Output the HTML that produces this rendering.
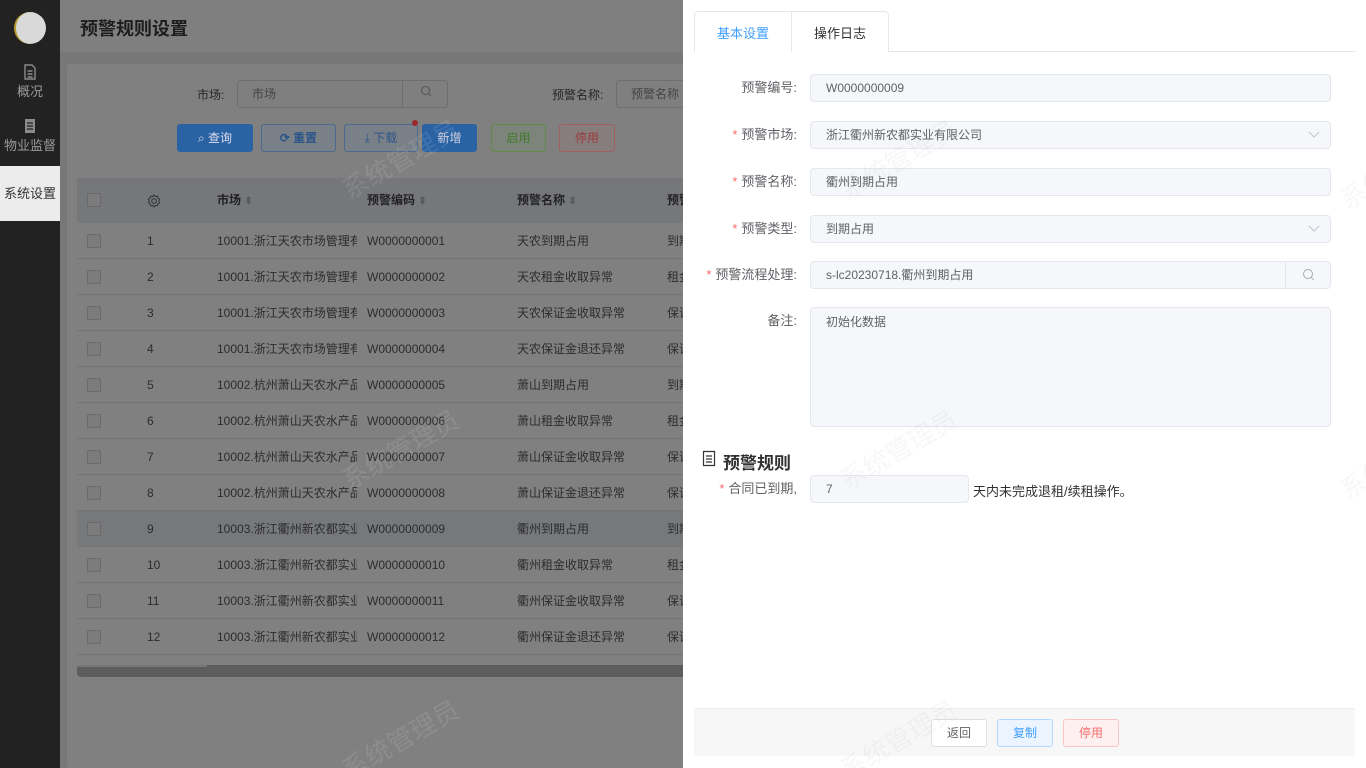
<!DOCTYPE html>
<html style="width:1366px;height:768px;overflow:hidden"><head><meta charset="utf-8">
<style>
*{margin:0;padding:0;box-sizing:border-box}
body{width:1366px;height:768px;overflow:hidden;position:relative;font-family:"Liberation Sans","Noto Sans CJK SC",sans-serif;font-size:12px;color:#333;background:#777}
.a{position:absolute}
.side{left:0;top:0;width:60px;height:768px;background:#222}
.logo{left:14px;top:12px;width:32px;height:32px;border-radius:50%;background:#d9d9d9;border-left:2px solid #b89a30}
.nav{left:0;width:60px;text-align:center;color:#9a9a9a;font-size:13px}
.hdr{left:60px;top:0;width:623px;height:52px;background:#7f7f7f}
.hdr h1{position:absolute;left:20px;top:15px;font-size:18px;color:#1d1d1d;font-weight:bold}
.card{left:67px;top:64px;width:616px;height:704px;background:#808080;border-radius:3px}
.inp{border:1px solid #6e6e6e;border-radius:3px;background:#7f7f7f;color:#444;padding-left:14px;line-height:26px;height:28px}
.btn{height:28px;line-height:26px;border-radius:3px;text-align:center;font-size:12px;border:1px solid}
.th{left:77px;top:178px;width:606px;height:45px;background:#75777b}
.row{left:77px;width:606px;height:36px;border-bottom:1px solid #747474}
.row span,.th span{position:absolute;top:0;line-height:36px;white-space:nowrap;overflow:hidden;color:#2c2c2c}
.th span{line-height:45px;font-weight:bold;color:#222}
.cb{position:absolute;left:10px;top:11px;width:14px;height:14px;border:1px solid #6a6a6a;border-radius:2px;background:#7c7c7c}
.c1{left:70px}.c2{left:140px;width:140px}.c3{left:290px}.c4{left:440px}.c5{left:590px;width:16px}
.wm{position:absolute;font-size:26px;transform:rotate(-30deg);white-space:nowrap}
.drawer{left:683px;top:0;width:683px;height:768px;background:#fff;overflow:hidden}
.lbl{position:absolute;width:114px;left:0;text-align:right;font-size:13px;color:#606266;line-height:28px}
.lbl i{color:#f56c6c;font-style:normal;margin-right:4px}
.fi{position:absolute;left:127px;width:521px;height:28px;background:#f5f7fa;border:1px solid #e4e7ed;border-radius:4px;color:#606266;font-size:12px;line-height:26px;padding-left:15px}
</style></head><body>
<div class="a side"></div>
<div class="a logo"></div>
<div class="a nav" style="top:64px">
<svg width="14" height="16" viewBox="0 0 14 16"><path d="M2 1h7l3 3v11H2z M4.5 7h5M4.5 10h5M4.5 13h5" fill="none" stroke="#8a8a8a" stroke-width="1.4"/></svg><div style="margin-top:-2px">概况</div></div>
<div class="a nav" style="top:118px">
<svg width="14" height="16" viewBox="0 0 14 16"><rect x="2" y="1" width="10" height="14" fill="#8a8a8a"/><path d="M4 5h6M4 8h6M4 11h6" stroke="#222" stroke-width="1.2"/></svg><div style="margin-top:-2px">物业监督</div></div>
<div class="a" style="left:0;top:166px;width:60px;height:55px;background:#ececec;color:#333;font-size:13px;line-height:55px;text-align:center">系统设置</div>

<div class="a hdr"><h1>预警规则设置</h1></div>
<div class="a card"></div>
<div class="a" style="left:197px;top:86px;color:#262626;font-size:12px">市场:</div>
<div class="a inp" style="left:237px;top:80px;width:211px">市场</div>
<div class="a" style="left:402px;top:80px;width:46px;height:28px;border-left:1px solid #6e6e6e;text-align:center;line-height:26px;color:#555"><svg width="12" height="12" viewBox="0 0 12 12"><circle cx="5.5" cy="5.5" r="4" fill="none" stroke="#555" stroke-width="1.1"/><path d="M8.5 8.5l2.5 2.5" stroke="#555"/></svg></div>
<div class="a" style="left:552px;top:86px;color:#262626">预警名称:</div>
<div class="a inp" style="left:616px;top:80px;width:80px">预警名称</div>

<div class="a btn" style="left:177px;top:124px;width:76px;background:#2a63a4;border-color:#2a63a4;color:#dde">&#x2315; 查询</div>
<div class="a btn" style="left:261px;top:124px;width:75px;background:#7a8088;border-color:#4a6a90;color:#2a5588;font-weight:bold">⟳ 重置</div>
<div class="a btn" style="left:344px;top:124px;width:74px;background:#7a8088;border-color:#4a6a90;color:#2a5588">⤓ 下载</div>
<div class="a" style="left:412px;top:120px;width:6px;height:6px;border-radius:50%;background:#9a2a2a"></div>
<div class="a btn" style="left:422px;top:124px;width:55px;background:#2a63a4;border-color:#2a63a4;color:#ccd">新增</div>
<div class="a btn" style="left:491px;top:124px;width:55px;background:#7d857b;border-color:#5f8a4a;color:#3e7a2a">启用</div>
<div class="a btn" style="left:559px;top:124px;width:56px;background:#877d7d;border-color:#a06060;color:#9a3a3a">停用</div>

<div class="a th"><div class="cb" style="top:15px"></div>
<span style="left:70px"><svg width="14" height="14" viewBox="0 0 14 14" style="vertical-align:middle"><circle cx="7" cy="7" r="2.3" fill="none" stroke="#333"/><path d="M7 1l1.4 1.6 2-.4.5 2 1.8 1-1 1.8 1 1.8-1.8 1-.5 2-2-.4L7 13l-1.4-1.6-2 .4-.5-2-1.8-1 1-1.8-1-1.8 1.8-1 .5-2 2 .4z" fill="none" stroke="#333" stroke-width="1"/></svg></span>
<span class="c2">市场 <b style="color:#5a5a5a;font-size:10px">⬍</b></span><span class="c3">预警编码 <b style="color:#5a5a5a;font-size:10px">⬍</b></span><span class="c4">预警名称 <b style="color:#5a5a5a;font-size:10px">⬍</b></span><span class="c5">预警</span></div>

<div class="a row" style="top:223px"><div class="cb"></div><span class="c1">1</span><span class="c2">10001.浙江天农市场管理有限公司</span><span class="c3">W0000000001</span><span class="c4">天农到期占用</span><span class="c5">到期</span></div>
<div class="a row" style="top:259px"><div class="cb"></div><span class="c1">2</span><span class="c2">10001.浙江天农市场管理有限公司</span><span class="c3">W0000000002</span><span class="c4">天农租金收取异常</span><span class="c5">租金</span></div>
<div class="a row" style="top:295px"><div class="cb"></div><span class="c1">3</span><span class="c2">10001.浙江天农市场管理有限公司</span><span class="c3">W0000000003</span><span class="c4">天农保证金收取异常</span><span class="c5">保证</span></div>
<div class="a row" style="top:331px"><div class="cb"></div><span class="c1">4</span><span class="c2">10001.浙江天农市场管理有限公司</span><span class="c3">W0000000004</span><span class="c4">天农保证金退还异常</span><span class="c5">保证</span></div>
<div class="a row" style="top:367px"><div class="cb"></div><span class="c1">5</span><span class="c2">10002.杭州萧山天农水产品市场</span><span class="c3">W0000000005</span><span class="c4">萧山到期占用</span><span class="c5">到期</span></div>
<div class="a row" style="top:403px"><div class="cb"></div><span class="c1">6</span><span class="c2">10002.杭州萧山天农水产品市场</span><span class="c3">W0000000006</span><span class="c4">萧山租金收取异常</span><span class="c5">租金</span></div>
<div class="a row" style="top:439px"><div class="cb"></div><span class="c1">7</span><span class="c2">10002.杭州萧山天农水产品市场</span><span class="c3">W0000000007</span><span class="c4">萧山保证金收取异常</span><span class="c5">保证</span></div>
<div class="a row" style="top:475px"><div class="cb"></div><span class="c1">8</span><span class="c2">10002.杭州萧山天农水产品市场</span><span class="c3">W0000000008</span><span class="c4">萧山保证金退还异常</span><span class="c5">保证</span></div>
<div class="a row" style="top:511px;background:#76787c"><div class="cb"></div><span class="c1">9</span><span class="c2">10003.浙江衢州新农都实业有限公司</span><span class="c3">W0000000009</span><span class="c4">衢州到期占用</span><span class="c5">到期</span></div>
<div class="a row" style="top:547px"><div class="cb"></div><span class="c1">10</span><span class="c2">10003.浙江衢州新农都实业有限公司</span><span class="c3">W0000000010</span><span class="c4">衢州租金收取异常</span><span class="c5">租金</span></div>
<div class="a row" style="top:583px"><div class="cb"></div><span class="c1">11</span><span class="c2">10003.浙江衢州新农都实业有限公司</span><span class="c3">W0000000011</span><span class="c4">衢州保证金收取异常</span><span class="c5">保证</span></div>
<div class="a row" style="top:619px"><div class="cb"></div><span class="c1">12</span><span class="c2">10003.浙江衢州新农都实业有限公司</span><span class="c3">W0000000012</span><span class="c4">衢州保证金退还异常</span><span class="c5">保证</span></div>
<div class="a" style="left:77px;top:665px;width:606px;height:12px;background:#5d5d5d;border-radius:0 0 0 4px"></div>
<div class="a" style="left:77px;top:665px;width:130px;height:2px;background:#777"></div>

<div class="wm" style="left:335px;top:140px;color:rgba(255,255,255,.1)">系统管理员</div>
<div class="wm" style="left:335px;top:430px;color:rgba(255,255,255,.1)">系统管理员</div>
<div class="wm" style="left:335px;top:720px;color:rgba(255,255,255,.1)">系统管理员</div>

<div class="a drawer">
 <div class="a" style="left:11px;top:51px;width:661px;height:1px;background:#e4e7ed"></div>
 <div class="a" style="left:11px;top:11px;width:195px;height:41px;border:1px solid #e4e7ed;border-bottom:none;border-radius:4px 4px 0 0;background:#fff"></div>
 <div class="a" style="left:108px;top:11px;width:1px;height:41px;background:#e4e7ed"></div>
 <div class="a" style="left:12px;top:23px;width:96px;text-align:center;font-size:13px;color:#409eff">基本设置</div>
 <div class="a" style="left:109px;top:23px;width:96px;text-align:center;font-size:13px;color:#303133">操作日志</div>

 <div class="lbl" style="top:74px">预警编号:</div><div class="fi" style="top:74px">W0000000009</div>
 <div class="lbl" style="top:121px"><i>*</i>预警市场:</div><div class="fi" style="top:121px">浙江衢州新农都实业有限公司</div>
 <div class="lbl" style="top:168px"><i>*</i>预警名称:</div><div class="fi" style="top:168px">衢州到期占用</div>
 <div class="lbl" style="top:215px"><i>*</i>预警类型:</div><div class="fi" style="top:215px">到期占用</div>
 <div class="lbl" style="top:261px"><i>*</i>预警流程处理:</div><div class="fi" style="top:261px">s-lc20230718.衢州到期占用</div>
 <svg class="a" style="left:625px;top:130px" width="12" height="10" viewBox="0 0 12 10"><path d="M1 2l5 5 5-5" fill="none" stroke="#c0c4cc"/></svg>
 <svg class="a" style="left:625px;top:224px" width="12" height="10" viewBox="0 0 12 10"><path d="M1 2l5 5 5-5" fill="none" stroke="#c0c4cc"/></svg>
 <div class="a" style="left:602px;top:262px;width:1px;height:26px;background:#e4e7ed"></div>
 <svg class="a" style="left:619px;top:268px" width="13" height="13" viewBox="0 0 13 13"><circle cx="6" cy="6" r="4.5" fill="none" stroke="#a8abb2"/><path d="M9.3 9.3l2.5 2.5" stroke="#a8abb2"/></svg>
 <div class="lbl" style="top:307px">备注:</div>
 <div class="fi" style="top:307px;height:120px;line-height:28px">初始化数据</div>

 <svg class="a" style="left:19px;top:450px" width="14" height="17" viewBox="0 0 14 17"><path d="M1.5 1.5h11v14h-11z M4 6h6M4 9h6M4 12h6" fill="none" stroke="#333" stroke-width="1.2"/></svg>
 <div class="a" style="left:40px;top:449px;font-size:17px;font-weight:bold;color:#303133">预警规则</div>
 <div class="lbl" style="top:475px"><i>*</i>合同已到期,</div>
 <div class="fi" style="top:475px;width:159px">7</div>
 <div class="a" style="left:290px;top:481px;font-size:13px;color:#303133">天内未完成退租/续租操作。</div>

 <div class="a" style="left:11px;top:708px;width:661px;height:48px;background:#f7f7f7;border-top:1px solid #eee"></div>
 <div class="a btn" style="left:248px;top:719px;width:56px;background:#fff;border-color:#dcdfe6;color:#606266">返回</div>
 <div class="a btn" style="left:314px;top:719px;width:56px;background:#ecf5ff;border-color:#b3d8ff;color:#409eff">复制</div>
 <div class="a btn" style="left:380px;top:719px;width:56px;background:#fef0f0;border-color:#fbc4c4;color:#f56c6c">停用</div>

 <div class="wm" style="left:150px;top:140px;color:rgba(0,0,0,.03)">系统管理员</div>
 <div class="wm" style="left:150px;top:430px;color:rgba(0,0,0,.03)">系统管理员</div>
 <div class="wm" style="left:150px;top:720px;color:rgba(0,0,0,.03)">系统管理员</div>
 <div class="wm" style="left:650px;top:150px;color:rgba(0,0,0,.03)">系统管理员</div>
 <div class="wm" style="left:650px;top:440px;color:rgba(0,0,0,.03)">系统管理员</div>
</div>
</body></html>
